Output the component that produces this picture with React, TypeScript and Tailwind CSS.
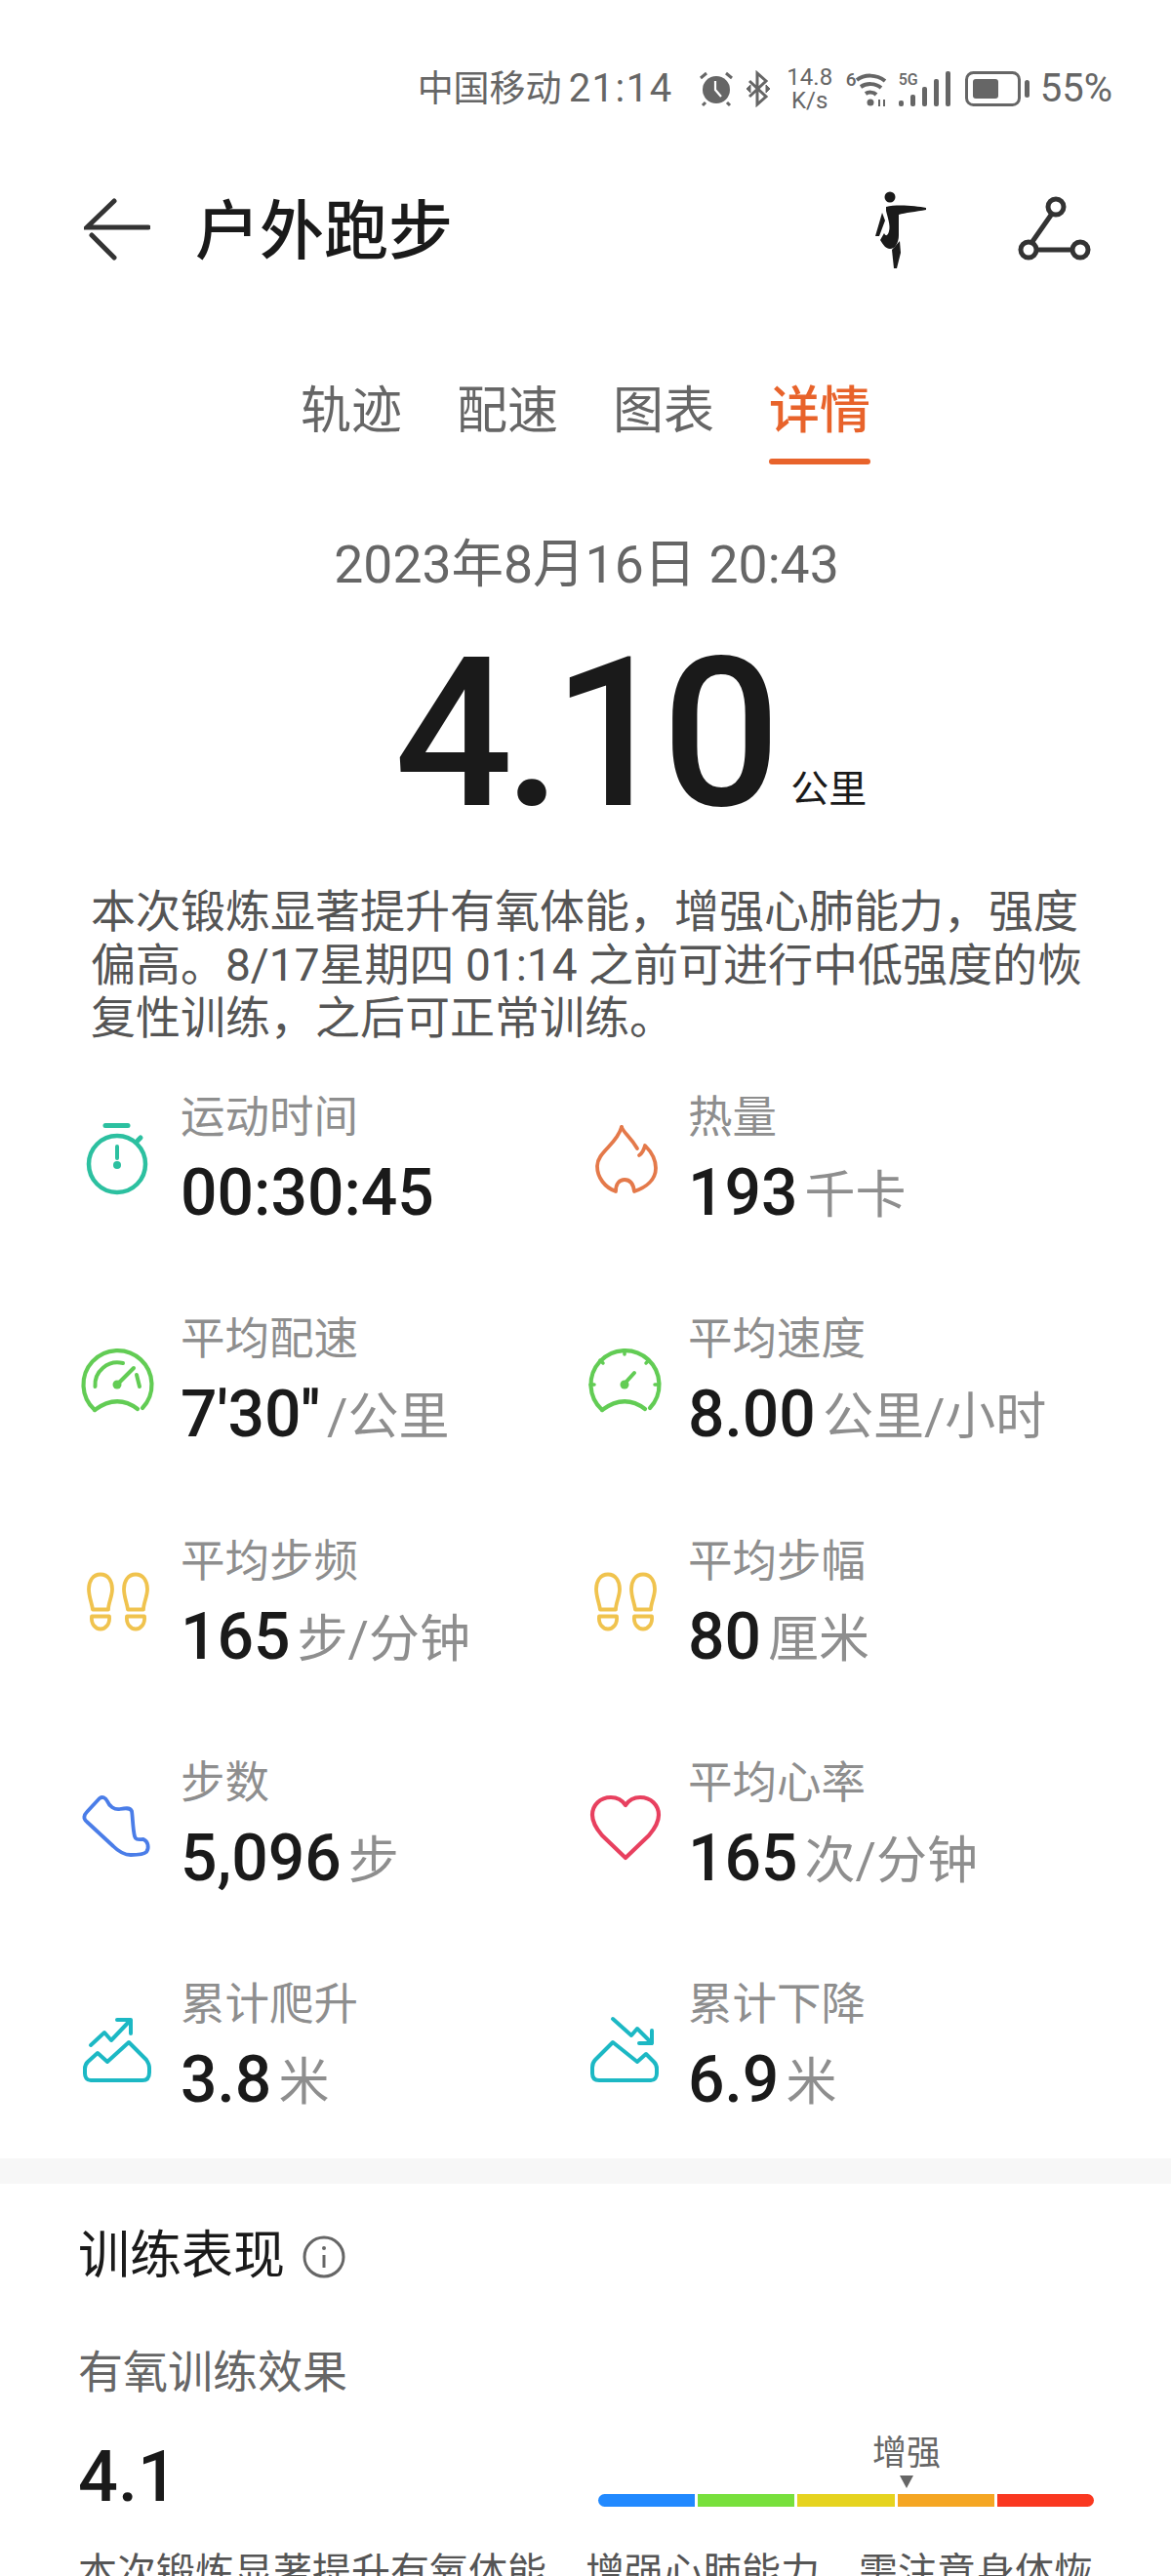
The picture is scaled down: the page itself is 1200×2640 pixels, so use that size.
import React from "react";

type StatItem = {
  label: string;
  value: string;
  unit: string;
  icon: React.ReactNode;
};

const Glyph = ({ color, children }: { color: string; children: React.ReactNode }) => (
  <svg
    viewBox="0 0 100 100"
    width="100"
    height="100"
    fill="none"
    stroke={color}
    strokeWidth="3.8"
    strokeLinecap="round"
    strokeLinejoin="round"
    className="shrink-0 -mt-[4px]"
  >
    {children}
  </svg>
);

const Stopwatch = () => (
  <Glyph color="#2cc0a0">
    <path d="M38 15.5H61" strokeWidth="5" />
    <circle cx="50" cy="55" r="29" strokeWidth="4.5" />
    <path d="M71 31L74 28" strokeWidth="5" />
    <path d="M50 37V49" strokeWidth="4" />
    <circle cx="50" cy="56" r="4" fill="#2cc0a0" stroke="none" />
  </Glyph>
);

const Flame = () => (
  <Glyph color="#e4794a">
    <g transform="translate(0 3)">
      <path d="M47 14C49 20 56 24 63 36" />
      <path d="M65 43C68 41 70 37 71 33C77 39 82 47 82 56C82 68 72 76 60 80C59 72 56 68 50 68C45 68 41 72 41 80C30 76 22 66 22 54C22 40 42 32 47 14" />
    </g>
  </Glyph>
);

const GaugeOuter = () => (
  <>
    <path d="M27 74A35 35 0 1 1 76 72" strokeWidth="4.2" />
    <path d="M27 74Q50 57 71 73" strokeWidth="4.2" />
  </>
);

const PaceGauge = () => (
  <Glyph color="#62cc54">
    <g transform="translate(0 6)">
      <GaugeOuter />
      <path d="M27.5 50A23 23 0 0 1 56 26" strokeWidth="4" />
      <path d="M70 38L73 50" strokeWidth="4" />
      <path d="M50 48L67 31" strokeWidth="4" />
      <circle cx="50" cy="48" r="4.5" fill="#62cc54" stroke="none" />
    </g>
  </Glyph>
);

const SpeedGauge = () => (
  <Glyph color="#62cc54">
    <g transform="translate(0 6)">
      <GaugeOuter />
      <path d="M50 13V17M25 23L28 26M15 48H19M75 23L72 26M85 48H81" strokeWidth="3.5" />
      <path d="M50 47L60 36" strokeWidth="4" />
      <circle cx="50" cy="48" r="4.5" fill="#62cc54" stroke="none" />
    </g>
  </Glyph>
);

const Feet = () => (
  <Glyph color="#f0c34e">
    <g transform="translate(0 -1.5)">
      <path d="M33 23C25 23 21 30 21 38C21 46 24 52 25 59H41C41 52 45 46 45 38C45 30 41 23 33 23Z" />
      <path d="M24 66H42C43 74 38 79 33 79C28 79 23 74 24 66Z" />
      <path d="M69 23C61 23 57 30 57 38C57 46 60 52 61 59H77C77 52 81 46 81 38C81 30 77 23 69 23Z" />
      <path d="M60 66H78C79 74 74 79 69 79C64 79 59 74 60 66Z" />
    </g>
  </Glyph>
);

const Shoe = () => (
  <Glyph color="#4a7de8">
    <g transform="translate(0 1)">
      <path d="M32 23C35 21 38 22 40 26C42 31 47 35 53 34C58 33 63 32 65 36C66 42 66 54 68 62C69 66 72 65 77 65C82 67 83 74 80 78C77 81 70 81 64 81C57 81 51 77 46 72L19 47C15 44 16 40 19 37Z" />
    </g>
  </Glyph>
);

const Heart = () => (
  <Glyph color="#e8405f">
    <path
      d="M51 31C47 25 42 23 36 23C25 23 17 31 17 41C17 49 21 55 27 62L51 85L75 62C81 55 85 49 85 41C85 31 77 23 66 23C60 23 55 25 51 31Z"
      strokeWidth="4.2"
    />
  </Glyph>
);

const Climb = () => (
  <Glyph color="#1cb8c4">
    <g transform="translate(0 14)">
      <path d="M23 71H76C81 71 83 68 83 63V58C83 55 82 53 80 50L62 32L40 52L30 43L20 52C18 54 17 56 17 59V64C17 68 19 71 23 71Z" strokeWidth="4" />
      <path d="M23 35L37 22L44 30L63 10M50 9H64V23" strokeWidth="4" />
    </g>
  </Glyph>
);

const Descent = () => (
  <Glyph color="#1cb8c4">
    <g transform="translate(0 14)">
      <path d="M24 71H77C81 71 83 68 83 64V59C83 56 82 54 80 52L72 44L63 52L38 32L20 50C18 52 17 55 17 58V64C17 68 19 71 24 71Z" strokeWidth="4" />
      <path d="M38 8L57 25L63 18L78 33M78 20V33H65" strokeWidth="4" />
    </g>
  </Glyph>
);

const stats: StatItem[] = [
  { label: "运动时间", value: "00:30:45", unit: "", icon: <Stopwatch /> },
  { label: "热量", value: "193", unit: "千卡", icon: <Flame /> },
  { label: "平均配速", value: "7'30''", unit: "/公里", icon: <PaceGauge /> },
  { label: "平均速度", value: "8.00", unit: "公里/小时", icon: <SpeedGauge /> },
  { label: "平均步频", value: "165", unit: "步/分钟", icon: <Feet /> },
  { label: "平均步幅", value: "80", unit: "厘米", icon: <Feet /> },
  { label: "步数", value: "5,096", unit: "步", icon: <Shoe /> },
  { label: "平均心率", value: "165", unit: "次/分钟", icon: <Heart /> },
  { label: "累计爬升", value: "3.8", unit: "米", icon: <Climb /> },
  { label: "累计下降", value: "6.9", unit: "米", icon: <Descent /> },
];

const effectBar = ["bg-[#2189ff] rounded-l-full", "bg-[#78e03c]", "bg-[#e6d31f]", "bg-[#f5a623]", "bg-[#fa3820] rounded-r-full"];

const StatusBar = () => (
  <div className="h-[176px] pt-[6px] flex items-center justify-end pr-[60px] text-[#666]">
    <span className="text-[37px] leading-none">中国移动</span>
    <span className="text-[40px] leading-none ml-[7px] tracking-[1.5px]">21:14</span>
    {/* alarm */}
    <svg width="38" height="38" viewBox="0 0 38 38" className="ml-[25px]" fill="#666">
      <circle cx="19" cy="20" r="14" />
      <path d="M18 11V20L24 27" stroke="#fff" strokeWidth="2.2" fill="none" />
      <path d="M3 8L9 3M35 8L29 3M8 33L5 36M30 33L33 36" stroke="#666" strokeWidth="3" />
    </svg>
    {/* bluetooth */}
    <svg width="28" height="38" viewBox="0 0 28 38" className="ml-[10px]" fill="none" stroke="#666" strokeWidth="3">
      <path d="M5 11L22 27L13 35V3L22 11L5 27" />
      <path d="M2 19L6 15V23ZM26 19L22 15V23Z" fill="#666" strokeWidth="1" />
    </svg>
    <div className="ml-[15px] w-[48px] flex flex-col items-center text-[24px] leading-[24px]">
      <span>14.8</span>
      <span>K/s</span>
    </div>
    {/* wifi 6 */}
    <div className="ml-[13px] relative w-[44px] h-[38px]">
      <span className="absolute left-0 top-0 text-[19px] leading-[20px] font-medium">6</span>
      <svg width="44" height="38" viewBox="0 0 44 38" fill="none" stroke="#666" strokeWidth="4">
        <path d="M11 10C19 4 31 4 40 11M15 17C21 13 30 13 36 18M20 24C23 22 28 22 31 25" />
        <circle cx="25" cy="33" r="3.5" fill="#666" stroke="none" />
        <path d="M34 30V37M39 30V37" strokeWidth="2" />
      </svg>
    </div>
    {/* 5g signal */}
    <div className="ml-[10px] relative w-[54px] h-[36px]">
      <span className="absolute left-0 top-0 text-[16px] leading-[18px] font-medium">5G</span>
      <svg width="54" height="36" viewBox="0 0 54 36" fill="#666">
        <rect x="0" y="30" width="5" height="6" rx="2" />
        <rect x="12" y="24" width="5" height="12" rx="2" />
        <rect x="24" y="16" width="5" height="20" rx="2" />
        <rect x="36" y="8" width="5" height="28" rx="2" />
        <rect x="48" y="0" width="5" height="36" rx="2" />
      </svg>
    </div>
    {/* battery */}
    <svg width="66" height="36" viewBox="0 0 66 36" className="ml-[14px]" fill="none">
      <rect x="1.5" y="1.5" width="54" height="33" rx="7" stroke="#666" strokeWidth="3" />
      <rect x="8" y="8" width="26" height="20" rx="3" fill="#666" />
      <rect x="61" y="9" width="5" height="18" rx="2.5" fill="#666" />
    </svg>
    <span className="text-[40px] leading-none ml-[11px]">55%</span>
  </div>
);

const TitleBar = () => (
  <div className="h-[118px] flex items-center pl-[86px] pr-[82px]">
    <svg width="68" height="64" viewBox="0 0 68 64" fill="none" stroke="#333" strokeWidth="5" strokeLinecap="round">
      <path d="M31 3L3 30H66" />
      <path d="M8 38L31 61" />
    </svg>
    <h1 className="text-[66px] leading-none font-medium text-[#1a1a1a] ml-[46px] mt-[6px]">户外跑步</h1>
    <div className="ml-auto flex items-center">
      <svg width="100" height="100" viewBox="0 0 100 100" fill="#1a1a1a" className="-mt-[8px]">
        <circle cx="33" cy="21" r="5.5" />
        <path d="M29 31C40 28 60 30 70 32V34C60 36 48 37 42 39V60C42 68 38 74 33 74C29 74 26 70 23 65L27 58C29 62 31 60 32 56C34 50 30 40 29 35Z" />
        <path d="M25 37L28 45L22 61H18Z" />
        <path d="M43 66L44 78L40 94H37L35 75Z" />
      </svg>
      <svg width="76" height="70" viewBox="0 0 76 70" className="ml-[63px] -mt-[2px]" fill="none" stroke="#333" strokeWidth="5">
        <circle cx="40" cy="13" r="8" />
        <circle cx="12" cy="57" r="8" />
        <circle cx="65" cy="57" r="8" />
        <path d="M36 20L15 50M20 57H57" />
      </svg>
    </div>
  </div>
);

export default function App() {
  return (
    <div className="w-[1200px] h-[2640px] overflow-hidden bg-white font-['Roboto','Noto_Sans_CJK_SC',sans-serif]">
      <StatusBar />
      <TitleBar />

      {/* tabs */}
      <div className="mt-[93px] flex justify-center gap-14 text-[52px] leading-[70px]">
        {["轨迹", "配速", "图表", "详情"].map((tab) => (
          <div key={tab} className="flex flex-col">
            <span className={tab === "详情" ? "text-[#e8632b] font-medium" : "text-[#666]"}>{tab}</span>
            <div className={`mt-[13px] h-[6px] rounded-full ${tab === "详情" ? "bg-[#e8632b]" : "bg-transparent"}`} />
          </div>
        ))}
      </div>

      <div className="mt-[68px] h-[70px] flex items-center justify-center text-[53.5px] text-[#666] pl-[2px]">2023年8月16日 20:43</div>

      <div className="mt-[38px] h-[200px] flex items-end pl-[404px]">
        <span className="text-[214px] leading-[200px] font-medium tracking-[-9.5px] text-[#1a1a1a]">4.10</span>
        <span className="text-[39px] leading-[50px] text-[#1a1a1a] ml-[20px] mb-[18px]">公里</span>
      </div>

      <p className="mt-[55px] pl-[93px] pr-[84px] text-[46px] leading-[54.5px] text-[#555]">
        本次锻炼显著提升有氧体能，增强心肺能力，强度偏高。8/17星期四 01:14 之前可进行中低强度的恢复性训练，之后可正常训练。
      </p>

      {/* stats */}
      <div className="mt-[46px] pl-[70px] grid grid-cols-[520px_1fr] gap-y-[81.25px]">
        {stats.map((s) => (
          <div key={s.label} className="h-[146px] flex items-center gap-[15px]">
            {s.icon}
            <div>
              <div className="text-[45.5px] leading-[60px] text-[#8e8e8e]">{s.label}</div>
              <div className="mt-[7px] h-[80px] flex items-center">
                <span className="text-[66px] leading-[80px] font-medium text-[#1a1a1a]">{s.value}</span>
                {s.unit && <span className="text-[52px] leading-[80px] text-[#8e8e8e] ml-[7px] mt-[6px]">{s.unit}</span>}
              </div>
            </div>
          </div>
        ))}
      </div>

      <div className="mt-[40px] h-[26px] bg-[#f7f7f7]" />

      {/* training section */}
      <div className="px-[80px]">
        <div className="mt-[40px] h-[70px] flex items-center gap-[18px]">
          <h2 className="text-[53px] leading-none text-[#1a1a1a]">训练表现</h2>
          <svg width="44" height="44" viewBox="0 0 44 44" fill="none" stroke="#666" strokeWidth="3">
            <circle cx="22" cy="22" r="20" />
            <path d="M22 20V33" />
            <circle cx="22" cy="13" r="2" fill="#666" stroke="none" />
          </svg>
        </div>
        <div className="mt-[54px] h-[60px] flex items-center text-[46px] text-[#666]">有氧训练效果</div>
        <div className="mt-[28px] h-[80px] flex items-end justify-between -mr-px">
          <span className="text-[72px] leading-[80px] font-medium text-[#1a1a1a] -mb-[9px]">4.1</span>
          <div className="w-[508px] mb-[1px]">
            <div className="ml-[281px] w-[70px] flex flex-col items-center">
              <span className="text-[35px] leading-[38px] text-[#666]">增强</span>
              <div className="mt-[3px] w-0 h-0 border-x-[7px] border-x-transparent border-t-[13px] border-t-[#666]" />
            </div>
            <div className="mt-[6px] flex gap-[3px]">
              {effectBar.map((c) => (
                <div key={c} className={`flex-1 h-[13px] ${c}`} />
              ))}
            </div>
          </div>
        </div>
        <p className="mt-[37px] text-[40px] leading-[60px] text-[#555]">
          本次锻炼显著提升有氧体能，增强心肺能力，需注意身体恢复。
        </p>
      </div>
    </div>
  );
}
